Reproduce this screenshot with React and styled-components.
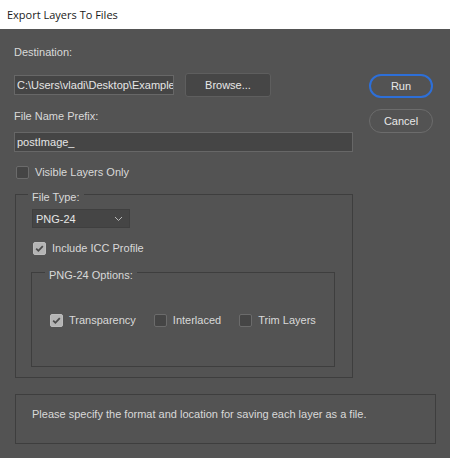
import React from "react";
import styled, { createGlobalStyle } from "styled-components";

const Global = createGlobalStyle`
  html, body { margin: 0; padding: 0; background: #535353; }
  body { width: 450px; height: 458px; overflow: hidden; }
  * { box-sizing: border-box; }
`;

const Window = styled.div`
  width: 450px;
  height: 458px;
  display: flex;
  flex-direction: column;
  background: #535353;
  font-family: "Liberation Sans", Arial, sans-serif;
  font-size: 11px;
  color: #d9d9d9;
`;

const TitleBar = styled.div`
  height: 29px;
  flex: none;
  background: #ffffff;
  color: #1a1a1a;
  font-family: "Open Sans", "Noto Sans", sans-serif;
  font-size: 11px;
  display: flex;
  align-items: center;
  padding: 0 0 1px 7px;
`;

const Body = styled.div`
  display: flex;
  flex-direction: column;
  padding: 16px 14px 0 14px;
`;

const Main = styled.div`
  display: flex;
  gap: 16px;
`;

const LeftCol = styled.div`
  width: 339px;
  display: flex;
  flex-direction: column;
`;

const RightCol = styled.div`
  width: 64px;
  display: flex;
  flex-direction: column;
  gap: 11px;
  padding-top: 29px;
`;

const Label = styled.div`
  line-height: 14px;
  height: 14px;
  margin-top: ${(p) => p.$mt || 0}px;
  white-space: nowrap;
`;

const Row = styled.div`
  display: flex;
  align-items: center;
  gap: 11px;
  margin-top: ${(p) => p.$mt || 0}px;
`;

const TextInput = styled.div`
  width: ${(p) => p.$w}px;
  height: 20px;
  background: #454545;
  border: 1px solid #676767;
  display: flex;
  align-items: center;
  padding: 0 2px;
  font-size: 11px;
  color: #e6e6e6;
  white-space: nowrap;
  overflow: hidden;
  margin-top: ${(p) => p.$mt || 0}px;
`;

const Button = styled.div`
  width: ${(p) => p.$w || 64}px;
  height: 24px;
  border-radius: ${(p) => (p.$pill ? 12 : 3)}px;
  border: ${(p) => (p.$primary ? "2px solid #2d6fd8" : p.$pill ? "1px solid #6c6c6c" : "1px solid #5e5e5e")};
  background: ${(p) => (p.$pill ? "transparent" : "#464646")};
  display: flex;
  align-items: center;
  justify-content: center;
  font-size: 11px;
  color: #e8e8e8;
`;

const CheckRow = styled.div`
  display: flex;
  align-items: center;
  gap: ${(p) => p.$gap || 18}px;
  margin-top: ${(p) => p.$mt || 0}px;
  margin-left: ${(p) => p.$ml || 0}px;
`;

const CheckItem = styled.div`
  display: flex;
  align-items: center;
  gap: 6px;
  line-height: 14px;
  white-space: nowrap;
`;

const Box = styled.div`
  width: 13px;
  height: 13px;
  border-radius: 2px;
  background: ${(p) => (p.$checked ? "#b4b4b4" : "#454545")};
  border: 1px solid ${(p) => (p.$checked ? "#bcbcbc" : "#6b6b6b")};
  display: flex;
  align-items: center;
  justify-content: center;
  flex: none;
`;

const Group = styled.div`
  position: relative;
  border: 1px solid #3e3e3e;
  display: flex;
  flex-direction: column;
  margin-top: ${(p) => p.$mt || 0}px;
  margin-left: ${(p) => p.$ml || 0}px;
  margin-right: ${(p) => p.$mr || 0}px;
  height: ${(p) => p.$h}px;
  padding: ${(p) => p.$pad};
`;

const Legend = styled.div`
  position: absolute;
  top: -5px;
  left: ${(p) => p.$left}px;
  padding: 0 4px 0 4px;
  background: #535353;
  line-height: 14px;
  height: 14px;
  white-space: nowrap;
`;

const Select = styled.div`
  width: 98px;
  height: 19px;
  background: #454545;
  border: 1px solid #3f3f3f;
  display: flex;
  align-items: center;
  justify-content: space-between;
  padding: 0 6px 0 3px;
  font-size: 11px;
  color: #e6e6e6;
`;

const InfoBox = styled.div`
  margin-top: 16px;
  margin-left: 1px;
  width: 421px;
  height: 50px;
  border: 1px solid #3e3e3e;
  padding: 12px 0 0 16px;
  line-height: 14px;
  white-space: nowrap;
`;

const Check = ({ checked }) => (
  <Box $checked={checked}>
    {checked && (
      <svg width="11" height="11" viewBox="0 0 11 11">
        <polyline points="2.2,5.6 4.4,7.8 8.8,3.2" fill="none" stroke="#4a4a4a" strokeWidth="1.8" />
      </svg>
    )}
  </Box>
);

const Chevron = () => (
  <svg width="9" height="6" viewBox="0 0 9 6">
    <polyline points="1,1 4.5,4.5 8,1" fill="none" stroke="#b8b8b8" strokeWidth="1" />
  </svg>
);

export default function App() {
  return (
    <Window>
      <Global />
      <TitleBar>Export Layers To Files</TitleBar>
      <Body>
        <Main>
          <LeftCol>
            <Label>Destination:</Label>
            <Row $mt={14}>
              <TextInput $w={160}>C:\Users\vladi\Desktop\Example</TextInput>
              <Button $w={86}>Browse...</Button>
            </Row>
            <Label $mt={12}>File Name Prefix:</Label>
            <TextInput $w={339} $mt={9}>postImage_</TextInput>
            <CheckRow $mt={13} $ml={2}>
              <CheckItem>
                <Check />
                Visible Layers Only
              </CheckItem>
            </CheckRow>
            <Group $mt={15} $ml={1} $h={184} $pad="14px 0 0 16px">
              <Legend $left={12}>File Type:</Legend>
              <Select>
                PNG-24
                <Chevron />
              </Select>
              <CheckRow $mt={13} $ml={1}>
                <CheckItem>
                  <Check checked />
                  Include ICC Profile
                </CheckItem>
              </CheckRow>
              <Group $mt={17} $ml={-1} $mr={17} $h={95} $pad="40px 0 0 18px">
                <Legend $left={13}>PNG-24 Options:</Legend>
                <CheckRow>
                  <CheckItem>
                    <Check checked />
                    Transparency
                  </CheckItem>
                  <CheckItem>
                    <Check />
                    Interlaced
                  </CheckItem>
                  <CheckItem>
                    <Check />
                    Trim Layers
                  </CheckItem>
                </CheckRow>
              </Group>
            </Group>
          </LeftCol>
          <RightCol>
            <Button $pill $primary>Run</Button>
            <Button $pill>Cancel</Button>
          </RightCol>
        </Main>
        <InfoBox>Please specify the format and location for saving each layer as a file.</InfoBox>
      </Body>
    </Window>
  );
}
